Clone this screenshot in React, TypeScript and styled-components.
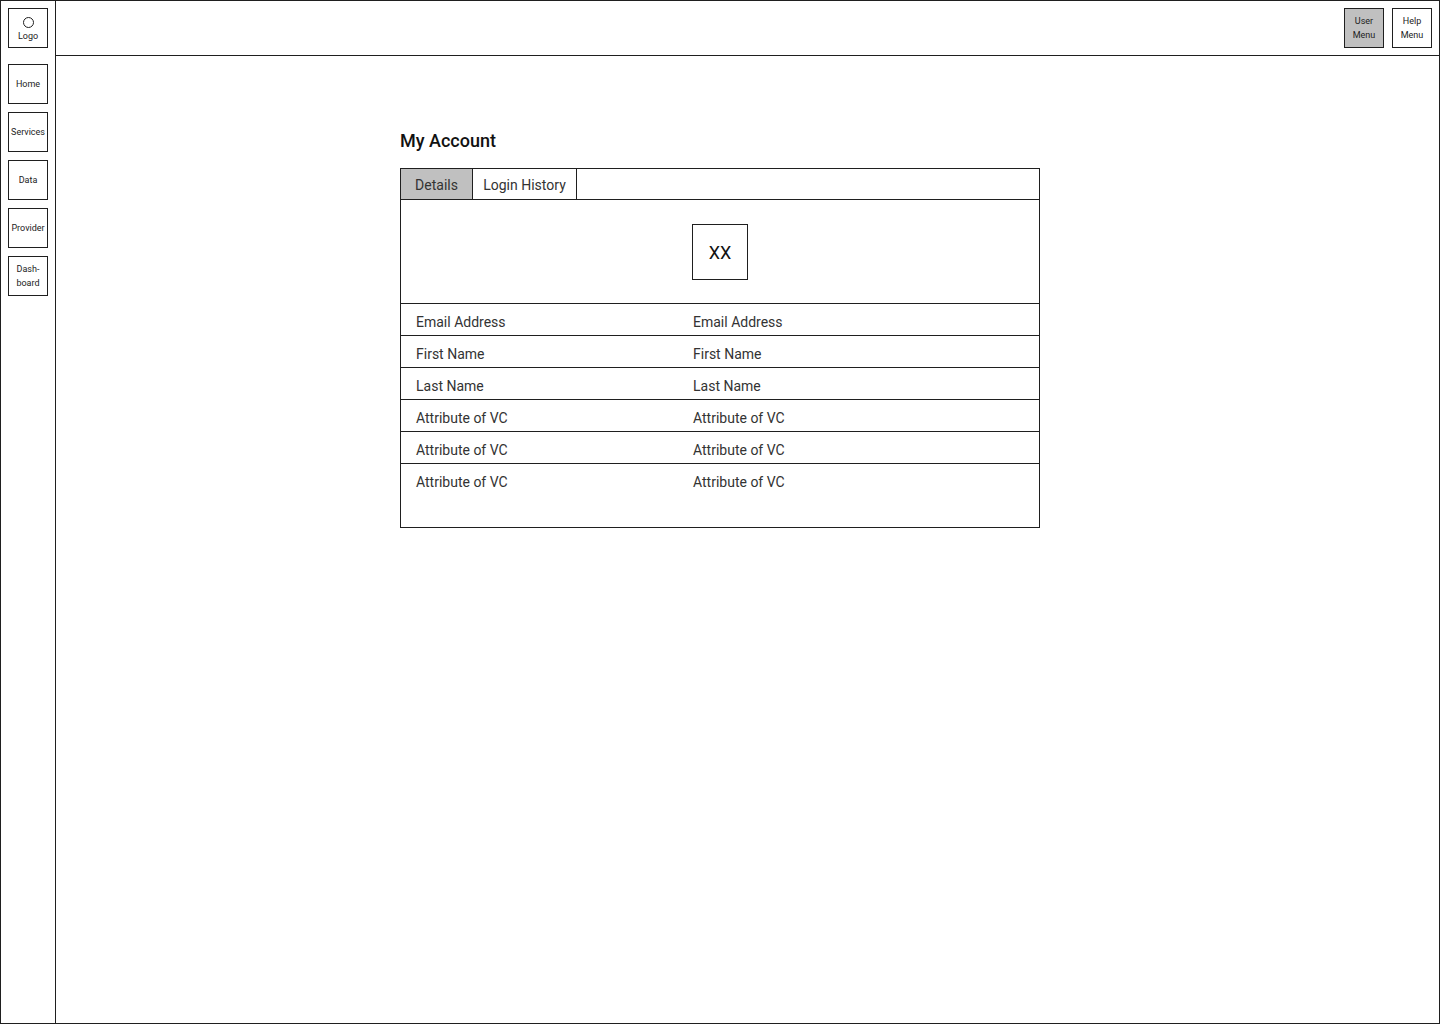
import React from "react";
import styled, { createGlobalStyle } from "styled-components";

const line = "#1f1f1f";
const gray = "#c0c0c0";

const GlobalStyle = createGlobalStyle`
  html, body { margin: 0; padding: 0; background: #fff; }
  body { font-family: Roboto, "Liberation Sans", sans-serif; color: #222; }
  * { box-sizing: border-box; }
`;

const Frame = styled.div`
  width: 1440px;
  height: 1024px;
  border: 1px solid ${line};
  display: grid;
  grid-template-columns: 55px 1fr;
  grid-template-rows: 55px 1fr;
  overflow: hidden;
`;

const Sidebar = styled.nav`
  grid-row: 1 / span 2;
  border-right: 1px solid ${line};
  display: flex;
  flex-direction: column;
  align-items: flex-start;
  padding: 7px 0 0 7px;
  gap: 8px;
`;

const NavBox = styled.div<{ $first?: boolean; $gray?: boolean }>`
  width: 40px;
  height: 40px;
  border: 1px solid ${line};
  background: ${(p) => (p.$gray ? gray : "#fff")};
  display: flex;
  flex-direction: column;
  align-items: center;
  justify-content: center;
  font-size: 9px;
  line-height: 14px;
  text-align: center;
  color: #222;
  margin-bottom: ${(p) => (p.$first ? "8px" : "0")};
`;

const LogoCircle = styled.span`
  width: 11px;
  height: 11px;
  border: 1px solid ${line};
  border-radius: 50%;
  margin-top: 2px;
`;

const LogoText = styled.span`
  line-height: 11px;
  margin-top: 3px;
`;

const Header = styled.header`
  border-bottom: 1px solid ${line};
  display: flex;
  justify-content: flex-end;
  align-items: flex-start;
  padding: 7px 7px 0 0;
  gap: 8px;
`;

const Main = styled.main`
  padding: 73px 0 0 344px;
`;

const Title = styled.h1`
  margin: 0 0 15px;
  font-size: 18px;
  font-weight: 500;
  line-height: 24px;
  color: #111;
`;

const Card = styled.section`
  width: 640px;
  border: 1px solid ${line};
`;

const TabBar = styled.div`
  display: flex;
  height: 31px;
  border-bottom: 1px solid ${line};
`;

const Tab = styled.div<{ $active?: boolean; $w: number }>`
  width: ${(p) => p.$w}px;
  border-right: 1px solid ${line};
  background: ${(p) => (p.$active ? gray : "#fff")};
  font-size: 14px;
  line-height: 30px;
  padding-top: 1px;
  text-align: center;
  color: #333;
`;

const AvatarArea = styled.div`
  display: flex;
  justify-content: center;
  padding: 24px 0 23px;
`;

const Avatar = styled.div`
  width: 56px;
  height: 56px;
  border: 1px solid ${line};
  display: flex;
  align-items: center;
  justify-content: center;
  font-size: 18px;
  color: #111;
`;

const Row = styled.div<{ $tall?: boolean }>`
  display: grid;
  grid-template-columns: 277px 1fr;
  border-top: 1px solid ${line};
  height: ${(p) => (p.$tall ? "64px" : "32px")};
  padding: 9px 15px 0;
  font-size: 14px;
  line-height: 18px;
  color: #333;
`;

const rows = [
  "Email Address",
  "First Name",
  "Last Name",
  "Attribute of VC",
  "Attribute of VC",
  "Attribute of VC",
];

export default function App() {
  return (
    <>
      <GlobalStyle />
      <Frame>
        <Sidebar>
          <NavBox $first>
            <LogoCircle />
            <LogoText>Logo</LogoText>
          </NavBox>
          <NavBox>Home</NavBox>
          <NavBox>Services</NavBox>
          <NavBox>Data</NavBox>
          <NavBox>Provider</NavBox>
          <NavBox>
            Dash-
            <br />
            board
          </NavBox>
        </Sidebar>
        <Header>
          <NavBox $gray>
            User
            <br />
            Menu
          </NavBox>
          <NavBox>
            Help
            <br />
            Menu
          </NavBox>
        </Header>
        <Main>
          <Title>My Account</Title>
          <Card>
            <TabBar>
              <Tab $active $w={72}>Details</Tab>
              <Tab $w={104}>Login History</Tab>
            </TabBar>
            <AvatarArea>
              <Avatar>XX</Avatar>
            </AvatarArea>
            {rows.map((r, i) => (
              <Row key={i} $tall={i === rows.length - 1}>
                <span>{r}</span>
                <span>{r}</span>
              </Row>
            ))}
          </Card>
        </Main>
      </Frame>
    </>
  );
}
